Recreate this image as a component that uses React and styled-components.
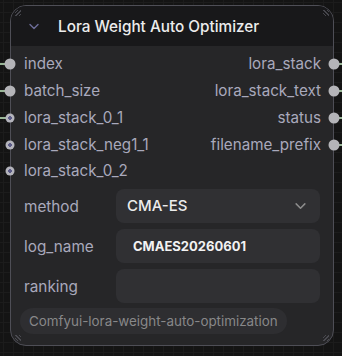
import styled, { createGlobalStyle } from 'styled-components';

const GlobalStyle = createGlobalStyle`
  html, body {
    margin: 0;
    padding: 0;
    background-color: #141414;
    background-image:
      linear-gradient(to right, #1c1c1c 1px, transparent 1px),
      linear-gradient(to bottom, #1c1c1c 1px, transparent 1px);
    background-size: 10px 10px;
    background-position: 3px 2px;
    font-family: Inter, "Noto Sans", sans-serif;
  }
`;

const inputs = [
  { name: 'index', kind: 'full', linked: true },
  { name: 'batch_size', kind: 'full', linked: true },
  { name: 'lora_stack_0_1', kind: 'ring', linked: true },
  { name: 'lora_stack_neg1_1', kind: 'ring' },
  { name: 'lora_stack_0_2', kind: 'ring' },
];

const outputs = ['lora_stack', 'lora_stack_text', 'status', 'filename_prefix'];

const Chevron = ({ size = 12, color }) => (
  <svg width={size} height={size} viewBox="0 0 12 12" fill="none">
    <path d="M2 4.5L6 8.5L10 4.5" stroke={color} strokeWidth="1.4" strokeLinecap="round" strokeLinejoin="round" />
  </svg>
);

const App = () => {
  return (
    <>
      <GlobalStyle />
      <Canvas>
        <Node>
          <Corner $pos="tl" />
          <Corner $pos="tr" />
          <Corner $pos="bl" />
          <Corner $pos="br" />
          <Header>
            <Chevron color="#6c6c98" />
            <Title>Lora Weight Auto Optimizer</Title>
          </Header>

          <Slots>
            <SlotColumn>
              {inputs.map((s) => (
                <SlotRow key={s.name}>
                  {s.linked && <Link $side="left" />}
                  <Dot $side="left" $ring={s.kind === 'ring'} />
                  <SlotLabel>{s.name}</SlotLabel>
                </SlotRow>
              ))}
            </SlotColumn>
            <SlotColumn $right>
              {outputs.map((name) => (
                <SlotRow key={name} $right>
                  <Link $side="right" />
                  <SlotLabel>{name}</SlotLabel>
                  <Dot $side="right" />
                </SlotRow>
              ))}
            </SlotColumn>
          </Slots>

          <Widgets>
            <WidgetRow>
              <WidgetLabel>method</WidgetLabel>
              <Field>
                <ComboValue>CMA-ES</ComboValue>
                <Chevron size={13} color="#8c8c8c" />
              </Field>
            </WidgetRow>
            <WidgetRow>
              <WidgetLabel>log_name</WidgetLabel>
              <Field>
                <TextValue>CMAES20260601</TextValue>
              </Field>
            </WidgetRow>
            <WidgetRow>
              <WidgetLabel>ranking</WidgetLabel>
              <Field />
            </WidgetRow>
          </Widgets>

          <Badge>Comfyui-lora-weight-auto-optimization</Badge>
        </Node>
      </Canvas>
    </>
  );
};

export default App;

const Canvas = styled.div`
  width: 342px;
  height: 356px;
  padding: 5px 0 0 10px;
  box-sizing: border-box;
`;

const Node = styled.div`
  position: relative;
  width: 324px;
  height: 341px;
  box-sizing: border-box;
  border: 1px solid #4e4e56;
  border-radius: 16px;
  background: #262628;
  display: flex;
  flex-direction: column;
`;

const Corner = styled.div`
  position: absolute;
  width: 6px;
  height: 6px;
  ${({ $pos }) => ($pos[0] === 't' ? 'top: 4px;' : 'bottom: 4px;')}
  ${({ $pos }) => ($pos[1] === 'l' ? 'left: 4px;' : 'right: 4px;')}
  background: repeating-linear-gradient(
    ${({ $pos }) => ($pos === 'tl' || $pos === 'br' ? '135deg' : '45deg')},
    transparent 0 1.5px,
    #5a5a62 1.5px 2.5px
  );
  opacity: 0.7;
  z-index: 2;
`;

const Header = styled.div`
  height: 40px;
  background: #18181a;
  border-radius: 15px 15px 0 0;
  display: flex;
  align-items: center;
  gap: 18px;
  padding-left: 17px;
`;

const Title = styled.div`
  color: #ececec;
  font-size: 15.3px;
  font-weight: 500;
`;

const Slots = styled.div`
  display: flex;
  justify-content: space-between;
  padding-top: 5px;
`;

const SlotColumn = styled.div`
  display: flex;
  flex-direction: column;
  align-items: ${({ $right }) => ($right ? 'flex-end' : 'flex-start')};
`;

const SlotRow = styled.div`
  position: relative;
  height: 26.75px;
  display: flex;
  align-items: center;
  padding: ${({ $right }) => ($right ? '0 12px 0 0' : '0 0 0 13px')};
`;

const SlotLabel = styled.span`
  color: #a9a9bc;
  font-size: 15.2px;
  line-height: 1;
  padding-bottom: 1px;
`;

const Dot = styled.span`
  position: absolute;
  top: 50%;
  ${({ $side }) => ($side === 'left' ? 'left: -1px;' : 'right: -1px;')}
  width: ${({ $ring }) => ($ring ? '9px' : '11px')};
  height: ${({ $ring }) => ($ring ? '9px' : '11px')};
  transform: translate(${({ $side }) => ($side === 'left' ? '-50%' : '50%')}, -50%);
  border-radius: 50%;
  background: ${({ $ring }) =>
    $ring ? 'radial-gradient(circle, #5c5c88 0 1.6px, #b4b4bc 2px)' : '#b4b4b8'};
  z-index: 3;
`;

const Link = styled.span`
  position: absolute;
  top: 50%;
  height: 2px;
  margin-top: -1px;
  width: 14px;
  ${({ $side }) => ($side === 'left' ? 'left: -14px;' : 'right: -14px;')}
  background: #98b596;
  z-index: 1;
`;

const Widgets = styled.div`
  display: flex;
  flex-direction: column;
  gap: 6px;
  padding: 4px 13px 0 13px;
`;

const WidgetRow = styled.div`
  display: grid;
  grid-template-columns: 92px 1fr;
  align-items: center;
`;

const WidgetLabel = styled.span`
  color: #a9a9bc;
  font-size: 15.3px;
  padding-top: 2px;
`;

const Field = styled.div`
  height: 34px;
  border-radius: 8px;
  background: #303033;
  display: flex;
  align-items: center;
  justify-content: space-between;
  padding: 0 13px 0 11px;
  box-sizing: border-box;
`;

const ComboValue = styled.span`
  color: #ececec;
  font-size: 15px;
  font-weight: 500;
`;

const TextValue = styled.span`
  color: #f2f2f2;
  font-size: 13px;
  font-weight: 700;
  padding-left: 6px;
`;

const Badge = styled.div`
  align-self: flex-start;
  margin: 5px 0 0 9px;
  height: 26px;
  display: flex;
  align-items: center;
  padding: 0 9px;
  border-radius: 13px;
  background: #2e2e31;
  color: #888889;
  font-size: 13.4px;
`;
